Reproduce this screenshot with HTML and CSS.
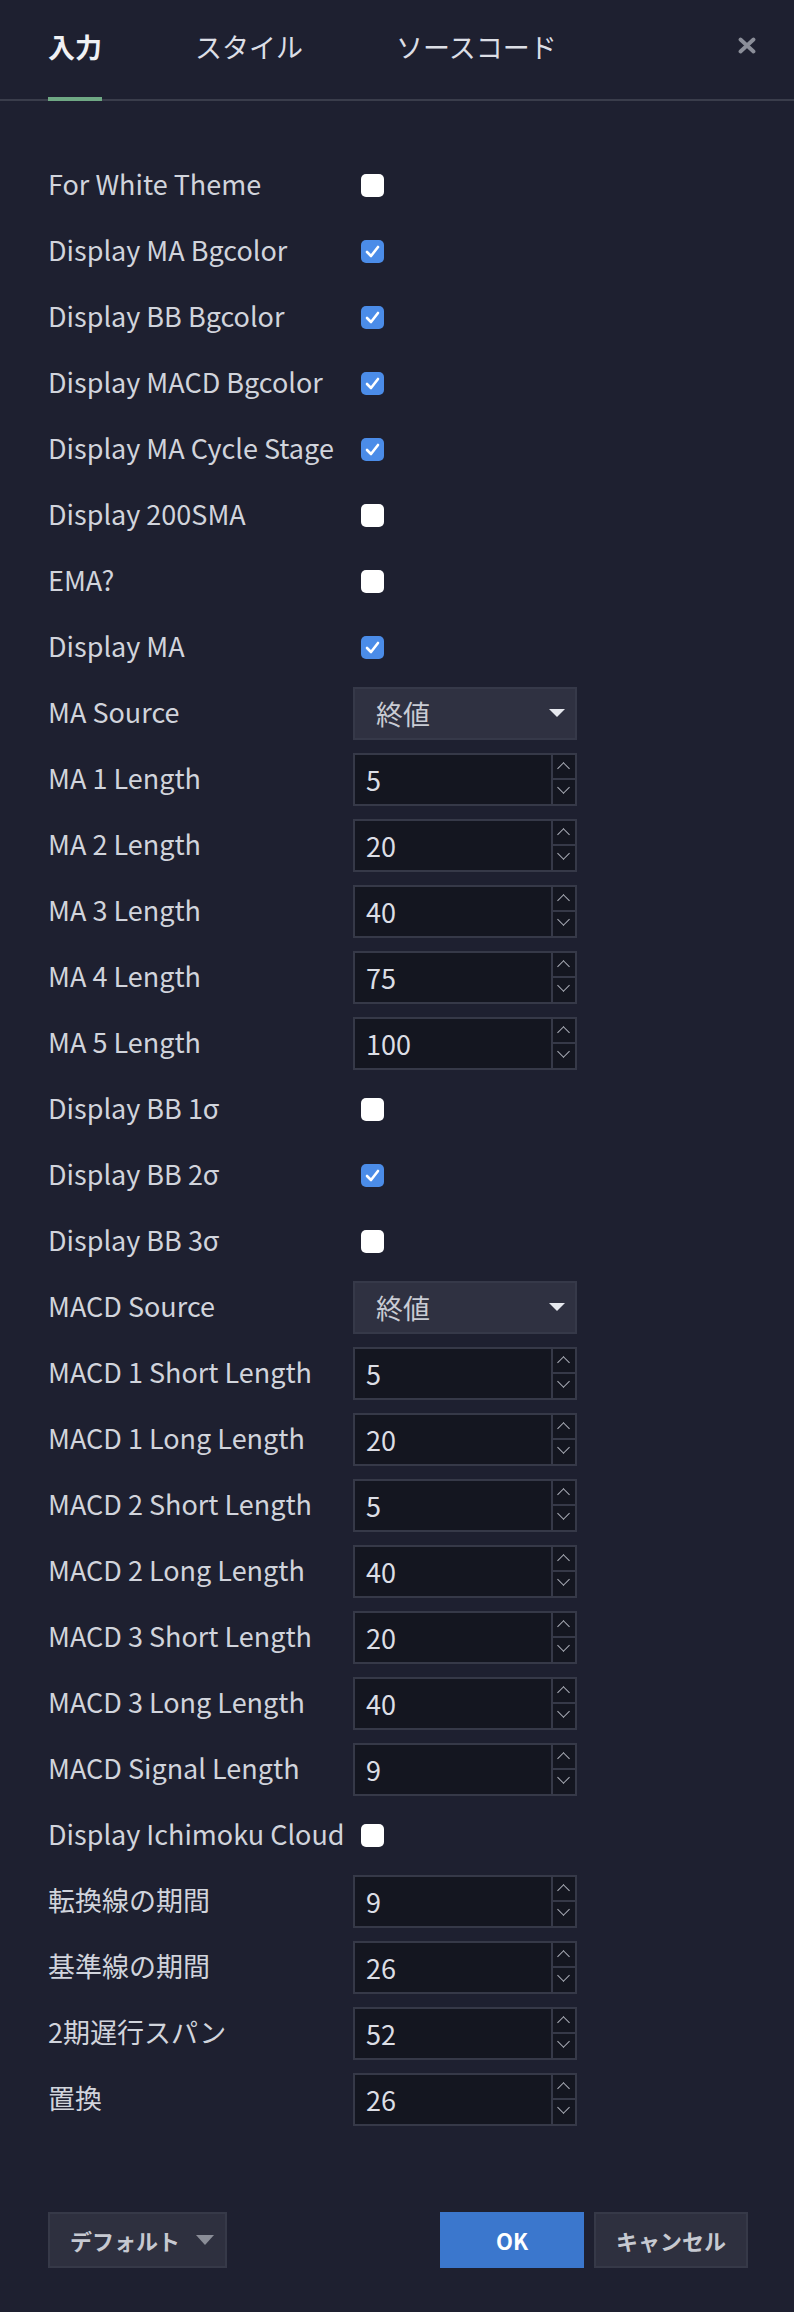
FILE: index.html
```html
<!DOCTYPE html>
<html lang="ja">
<head>
<meta charset="utf-8">
<title>設定</title>
<link rel="stylesheet" href="styles.css">
</head>
<body>
<div class="dialog">
  <div class="header">
    <div class="tab active">入力</div>
    <div class="tab">スタイル</div>
    <div class="tab">ソースコード</div>
    <div class="close">
      <svg width="18" height="17" viewBox="0 0 18 17"><path d="M2.5 2.5 L15.5 14.5 M15.5 2.5 L2.5 14.5" stroke="#8b8e99" stroke-width="3.8" stroke-linecap="round"/></svg>
    </div>
  </div>

  <div class="content">
    <div class="row"><div class="label">For White Theme</div><div class="ctrl"><span class="cb"></span></div></div>
    <div class="row"><div class="label">Display MA Bgcolor</div><div class="ctrl"><span class="cb on"><svg viewBox="0 0 23 23"><path d="M6 12 L10 16 L17 7" /></svg></span></div></div>
    <div class="row"><div class="label">Display BB Bgcolor</div><div class="ctrl"><span class="cb on"><svg viewBox="0 0 23 23"><path d="M6 12 L10 16 L17 7" /></svg></span></div></div>
    <div class="row"><div class="label">Display MACD Bgcolor</div><div class="ctrl"><span class="cb on"><svg viewBox="0 0 23 23"><path d="M6 12 L10 16 L17 7" /></svg></span></div></div>
    <div class="row"><div class="label">Display MA Cycle Stage</div><div class="ctrl"><span class="cb on"><svg viewBox="0 0 23 23"><path d="M6 12 L10 16 L17 7" /></svg></span></div></div>
    <div class="row"><div class="label">Display 200SMA</div><div class="ctrl"><span class="cb"></span></div></div>
    <div class="row"><div class="label">EMA?</div><div class="ctrl"><span class="cb"></span></div></div>
    <div class="row"><div class="label">Display MA</div><div class="ctrl"><span class="cb on"><svg viewBox="0 0 23 23"><path d="M6 12 L10 16 L17 7" /></svg></span></div></div>
    <div class="row"><div class="label">MA Source</div><div class="ctrl"><div class="select"><span>終値</span><i class="tri"></i></div></div></div>
    <div class="row"><div class="label">MA 1 Length</div><div class="ctrl"><div class="num"><span class="val">5</span><span class="spin"><b class="up"></b><b class="dn"></b></span></div></div></div>
    <div class="row"><div class="label">MA 2 Length</div><div class="ctrl"><div class="num"><span class="val">20</span><span class="spin"><b class="up"></b><b class="dn"></b></span></div></div></div>
    <div class="row"><div class="label">MA 3 Length</div><div class="ctrl"><div class="num"><span class="val">40</span><span class="spin"><b class="up"></b><b class="dn"></b></span></div></div></div>
    <div class="row"><div class="label">MA 4 Length</div><div class="ctrl"><div class="num"><span class="val">75</span><span class="spin"><b class="up"></b><b class="dn"></b></span></div></div></div>
    <div class="row"><div class="label">MA 5 Length</div><div class="ctrl"><div class="num"><span class="val">100</span><span class="spin"><b class="up"></b><b class="dn"></b></span></div></div></div>
    <div class="row"><div class="label">Display BB 1σ</div><div class="ctrl"><span class="cb"></span></div></div>
    <div class="row"><div class="label">Display BB 2σ</div><div class="ctrl"><span class="cb on"><svg viewBox="0 0 23 23"><path d="M6 12 L10 16 L17 7" /></svg></span></div></div>
    <div class="row"><div class="label">Display BB 3σ</div><div class="ctrl"><span class="cb"></span></div></div>
    <div class="row"><div class="label">MACD Source</div><div class="ctrl"><div class="select"><span>終値</span><i class="tri"></i></div></div></div>
    <div class="row"><div class="label">MACD 1 Short Length</div><div class="ctrl"><div class="num"><span class="val">5</span><span class="spin"><b class="up"></b><b class="dn"></b></span></div></div></div>
    <div class="row"><div class="label">MACD 1 Long Length</div><div class="ctrl"><div class="num"><span class="val">20</span><span class="spin"><b class="up"></b><b class="dn"></b></span></div></div></div>
    <div class="row"><div class="label">MACD 2 Short Length</div><div class="ctrl"><div class="num"><span class="val">5</span><span class="spin"><b class="up"></b><b class="dn"></b></span></div></div></div>
    <div class="row"><div class="label">MACD 2 Long Length</div><div class="ctrl"><div class="num"><span class="val">40</span><span class="spin"><b class="up"></b><b class="dn"></b></span></div></div></div>
    <div class="row"><div class="label">MACD 3 Short Length</div><div class="ctrl"><div class="num"><span class="val">20</span><span class="spin"><b class="up"></b><b class="dn"></b></span></div></div></div>
    <div class="row"><div class="label">MACD 3 Long Length</div><div class="ctrl"><div class="num"><span class="val">40</span><span class="spin"><b class="up"></b><b class="dn"></b></span></div></div></div>
    <div class="row"><div class="label">MACD Signal Length</div><div class="ctrl"><div class="num"><span class="val">9</span><span class="spin"><b class="up"></b><b class="dn"></b></span></div></div></div>
    <div class="row"><div class="label">Display Ichimoku Cloud</div><div class="ctrl"><span class="cb"></span></div></div>
    <div class="row"><div class="label">転換線の期間</div><div class="ctrl"><div class="num"><span class="val">9</span><span class="spin"><b class="up"></b><b class="dn"></b></span></div></div></div>
    <div class="row"><div class="label">基準線の期間</div><div class="ctrl"><div class="num"><span class="val">26</span><span class="spin"><b class="up"></b><b class="dn"></b></span></div></div></div>
    <div class="row"><div class="label">2期遅行スパン</div><div class="ctrl"><div class="num"><span class="val">52</span><span class="spin"><b class="up"></b><b class="dn"></b></span></div></div></div>
    <div class="row"><div class="label">置換</div><div class="ctrl"><div class="num"><span class="val">26</span><span class="spin"><b class="up"></b><b class="dn"></b></span></div></div></div>
  </div>

  <div class="footer">
    <div class="btn default">デフォルト<i class="tri grey"></i></div>
    <div class="btn ok">OK</div>
    <div class="btn cancel">キャンセル</div>
  </div>
</div>
</body>
</html>
```

FILE: styles.css
```css
html, body {
  margin: 0;
  padding: 0;
  background: #1e2030;
}
body {
  width: 794px;
  height: 2312px;
  overflow: hidden;
  font-family: "Noto Sans CJK JP", "Noto Sans", sans-serif;
  color: #d1d4dc;
}
.dialog {
  display: flex;
  flex-direction: column;
}
.header {
  display: flex;
  height: 99px;
  border-bottom: 2px solid #3a3d4b;
  padding-left: 48px;
  gap: 93px;
}
.tab {
  font-size: 27px;
  line-height: 30px;
  padding-top: 32px;
  height: 65px;
  color: #dcdee5;
  border-bottom: 4px solid transparent;
  margin-bottom: -2px;
}
.tab.active {
  color: #f0f1f4;
  font-weight: 700;
  border-bottom-color: #6fa884;
}
.close {
  margin-left: auto;
  margin-right: 38px;
  padding-top: 35px;
}
.content {
  padding: 51px 0 0 48px;
}
.row {
  display: grid;
  grid-template-columns: 305px 224px;
  height: 66px;
  align-items: center;
}
.label {
  font-size: 27px;
  line-height: 34px;
  padding-bottom: 3px;
  white-space: nowrap;
  color: #d1d4dc;
}
.ctrl {
  display: flex;
  align-items: center;
}
.cb {
  width: 23px;
  height: 23px;
  margin-left: 8px;
  border-radius: 5px;
  background: #ffffff;
  display: block;
}
.cb.on {
  background: #4b8ce8;
}
.cb svg {
  width: 23px;
  height: 23px;
  display: block;
}
.cb svg path {
  fill: none;
  stroke: #ffffff;
  stroke-width: 2.6;
  stroke-linecap: round;
  stroke-linejoin: round;
}
.select {
  box-sizing: border-box;
  width: 224px;
  height: 53px;
  background: #2f3141;
  border: 2px solid #363949;
  display: flex;
  align-items: center;
  padding-left: 21px;
  padding-right: 10px;
  font-size: 27px;
  color: #c9ccd4;
}
.select span {
  flex: 1;
}
.tri {
  width: 0;
  height: 0;
  border-left: 8px solid transparent;
  border-right: 8px solid transparent;
  border-top: 8px solid #e6e8ee;
  display: block;
}
.num {
  box-sizing: border-box;
  width: 224px;
  height: 53px;
  background: #141620;
  border: 2px solid #363948;
  display: flex;
}
.val {
  flex: 1;
  padding-left: 11px;
  font-size: 27px;
  line-height: 49px;
  color: #dcdee5;
}
.spin {
  width: 22px;
  border-left: 2px solid #363948;
  display: flex;
  flex-direction: column;
}
.spin b {
  flex: 1;
  position: relative;
  display: block;
}
.spin b.up {
  border-bottom: 2px solid #363948;
}
.spin b::after {
  content: "";
  position: absolute;
  left: 6px;
  width: 8px;
  height: 8px;
  border-left: 1.6px solid #aeb1bb;
  border-top: 1.6px solid #aeb1bb;
}
.spin b.up::after {
  top: 9px;
  transform: rotate(45deg);
}
.spin b.dn::after {
  top: 3px;
  transform: rotate(225deg);
}
.footer {
  display: flex;
  padding: 80px 46px 0 48px;
  gap: 10px;
}
.btn {
  box-sizing: border-box;
  height: 56px;
  display: flex;
  align-items: center;
  justify-content: center;
  font-size: 22px;
  font-weight: 700;
}
.default {
  width: 179px;
  background: #2e303f;
  border: 2px solid #363948;
  color: #c6c9d1;
  justify-content: flex-start;
  padding-left: 20px;
  gap: 16px;
  margin-right: auto;
}
.tri.grey {
  border-left-width: 9px;
  border-right-width: 9px;
  border-top: 10px solid #8a8d97;
}
.ok {
  width: 144px;
  background: #3b77cd;
  color: #ffffff;
}
.cancel {
  width: 154px;
  background: #2e303f;
  border: 2px solid #363948;
  color: #c6c9d1;
}
```
